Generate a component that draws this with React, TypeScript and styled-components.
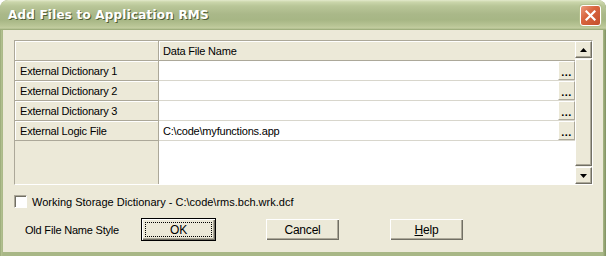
import React from 'react'
import styled, { createGlobalStyle } from 'styled-components'

const GlobalStyle = createGlobalStyle`
  html, body {
    margin: 0;
    padding: 0;
    background: #ffffff;
  }
  body {
    font-family: "Liberation Sans", Arial, sans-serif;
    font-size: 11px;
    color: #000;
  }
`

const Window = styled.div`
  width: 606px;
  height: 256px;
  display: flex;
  flex-direction: column;
  background: linear-gradient(to right, #8a9c6a 0, #b4c291 1px, #a8b786 3px, #a8b786 calc(100% - 3px), #7f9060 100%);
  border-radius: 8px 8px 0 0;
  box-sizing: border-box;
  padding: 0 3px 4px 3px;
  overflow: hidden;
`

const TitleBar = styled.div`
  height: 30px;
  margin: 0 -3px;
  display: flex;
  align-items: center;
  justify-content: space-between;
  padding: 0 5px 0 8px;
  box-sizing: border-box;
  border-radius: 8px 8px 0 0;
  background: linear-gradient(
    to bottom,
    #e3e9cc 0,
    #cbd6ab 2px,
    #b9c698 6px,
    #aab889 14px,
    #a7b685 20px,
    #b9c596 26px,
    #c2cda0 28px,
    #93a472 30px
  );
`

const Title = styled.span`
  font-family: "DejaVu Sans", "Liberation Sans", sans-serif;
  font-weight: bold;
  font-size: 12px;
  letter-spacing: 0.2px;
  color: #ffffff;
  text-shadow: 1px 1px 0 #4f5c34;
`

const CloseButton = styled.div`
  width: 21px;
  height: 21px;
  box-sizing: border-box;
  border: 1px solid #ffffff;
  border-radius: 3px;
  background: linear-gradient(135deg, #ea9b7e 0, #d9653f 40%, #c44f2b 100%);
  display: flex;
  align-items: center;
  justify-content: center;
  box-shadow: 0 0 0 1px #b3c08f;
`

const Body = styled.div`
  flex: 1;
  background: #ece9d8;
  display: flex;
  flex-direction: column;
  padding: 10px 10px 0 11px;
  box-sizing: border-box;
`

const GridFrame = styled.div`
  height: 145px;
  box-sizing: border-box;
  border-top: 1px solid #aca899;
  border-left: 1px solid #aca899;
  border-right: 1px solid #ffffff;
  border-bottom: 1px solid #ffffff;
  display: flex;
`

const Table = styled.div`
  flex: 1;
  display: grid;
  grid-template-columns: 144px 1fr;
  grid-template-rows: 20px 20px 20px 20px 20px 1fr;
`

const LabelCell = styled.div`
  background: #ece9d8;
  border-right: 1px solid #aca899;
  border-bottom: 1px solid #aca899;
  box-shadow: inset 1px 1px 0 #ffffff;
  display: flex;
  align-items: center;
  padding-left: 5px;
  letter-spacing: -0.2px;
  white-space: nowrap;
  overflow: hidden;
`

const HeaderCell = styled.div`
  background: #ece9d8;
  border-bottom: 1px solid #aca899;
  box-shadow: inset 1px 1px 0 #ffffff;
  display: flex;
  align-items: center;
  padding-left: 4px;
  letter-spacing: -0.2px;
`

const FillerLabel = styled.div`
  background: #ece9d8;
  border-right: 1px solid #aca899;
`

const DataCell = styled.div`
  background: #ffffff;
  border-bottom: 1px solid #d8d6cc;
  display: flex;
  align-items: stretch;
`

const DataText = styled.span`
  flex: 1;
  display: flex;
  align-items: center;
  padding-left: 4px;
  letter-spacing: -0.2px;
`

const DotsButton = styled.div`
  width: 17px;
  box-sizing: border-box;
  background: #ece9d8;
  border-top: 1px solid #ffffff;
  border-left: 1px solid #ffffff;
  border-right: 1px solid #aca899;
  border-bottom: 1px solid #aca899;
  display: flex;
  align-items: flex-end;
  justify-content: center;
  padding-bottom: 3px;
  font-size: 11px;
  font-weight: bold;
  line-height: 8px;
  letter-spacing: 0.5px;
`

const FillerData = styled.div`
  background: #ffffff;
`

const ScrollBar = styled.div`
  width: 17px;
  display: flex;
  flex-direction: column;
  background: #f4f3ec;
`

const ScrollButton = styled.div<{ grow?: boolean }>`
  height: ${({ grow }) => (grow ? 'auto' : '17px')};
  flex: ${({ grow }) => (grow ? 1 : 'none')};
  margin: ${({ grow }) => (grow ? '1px 0' : '0')};
  box-sizing: border-box;
  background: #ece9d8;
  border-top: 1px solid #ffffff;
  border-left: 1px solid #ffffff;
  border-right: 1px solid #716f64;
  border-bottom: 1px solid #716f64;
  box-shadow: inset -1px -1px 0 #aca899;
  display: flex;
  align-items: center;
  justify-content: center;
`

const CheckRow = styled.div`
  display: flex;
  align-items: center;
  margin-top: 9px;
  height: 15px;
`

const CheckBox = styled.div`
  width: 13px;
  height: 13px;
  box-sizing: border-box;
  background: #ffffff;
  border-top: 1px solid #aca899;
  border-left: 1px solid #aca899;
  border-right: 1px solid #ffffff;
  border-bottom: 1px solid #ffffff;
  box-shadow: inset 1px 1px 0 #716f64;
`

const CheckLabel = styled.span`
  margin-left: 5px;
`

const ButtonRow = styled.div`
  display: flex;
  align-items: center;
  margin-top: 9px;
  padding-left: 11px;
`

const OldLabel = styled.span`
  width: 116px;
  letter-spacing: -0.2px;
`

const DialogButton = styled.div<{ isDefault?: boolean }>`
  width: 75px;
  height: 23px;
  box-sizing: border-box;
  margin-right: 49px;
  background: #ece9d8;
  border: 1px solid ${({ isDefault }) => (isDefault ? '#000000' : 'transparent')};
  box-shadow: inset 1px 1px 0 #ffffff, inset -1px -1px 0 #716f64, inset -2px -2px 0 #aca899;
  display: flex;
  align-items: center;
  justify-content: center;
  padding: 3px;
`

const ButtonFace = styled.div<{ focused?: boolean }>`
  flex: 1;
  align-self: stretch;
  display: flex;
  align-items: center;
  justify-content: center;
  border: 1px dotted ${({ focused }) => (focused ? '#000000' : 'transparent')};
  font-size: 12px;
  letter-spacing: -0.2px;
`

const rows = [
  { label: 'External Dictionary 1', value: '' },
  { label: 'External Dictionary 2', value: '' },
  { label: 'External Dictionary 3', value: '' },
  { label: 'External Logic File', value: 'C:\\code\\myfunctions.app' },
]

function Arrow({ down }: { down?: boolean }) {
  return (
    <svg width="7" height="4" viewBox="0 0 7 4">
      <path d={down ? 'M0 0h7L3.5 4z' : 'M3.5 0L7 4H0z'} fill="#000" />
    </svg>
  )
}

export default function App() {
  return (
    <>
      <GlobalStyle />
      <Window>
        <TitleBar>
          <Title>Add Files to Application RMS</Title>
          <CloseButton>
            <svg width="11" height="11" viewBox="0 0 11 11">
              <path d="M1.5 1.5l8 8M9.5 1.5l-8 8" stroke="#ffffff" strokeWidth="2.2" strokeLinecap="square" />
            </svg>
          </CloseButton>
        </TitleBar>
        <Body>
          <GridFrame>
            <Table>
              <LabelCell />
              <HeaderCell>Data File Name</HeaderCell>
              {rows.map((r) => (
                <React.Fragment key={r.label}>
                  <LabelCell>{r.label}</LabelCell>
                  <DataCell>
                    <DataText>{r.value}</DataText>
                    <DotsButton>...</DotsButton>
                  </DataCell>
                </React.Fragment>
              ))}
              <FillerLabel />
              <FillerData />
            </Table>
            <ScrollBar>
              <ScrollButton>
                <Arrow />
              </ScrollButton>
              <ScrollButton grow />
              <ScrollButton>
                <Arrow down />
              </ScrollButton>
            </ScrollBar>
          </GridFrame>
          <CheckRow>
            <CheckBox />
            <CheckLabel>Working Storage Dictionary - C:\code\rms.bch.wrk.dcf</CheckLabel>
          </CheckRow>
          <ButtonRow>
            <OldLabel>Old File Name Style</OldLabel>
            <DialogButton isDefault>
              <ButtonFace focused>OK</ButtonFace>
            </DialogButton>
            <DialogButton>
              <ButtonFace>Cancel</ButtonFace>
            </DialogButton>
            <DialogButton>
              <ButtonFace>
                <u>H</u>elp
              </ButtonFace>
            </DialogButton>
          </ButtonRow>
        </Body>
      </Window>
    </>
  )
}
